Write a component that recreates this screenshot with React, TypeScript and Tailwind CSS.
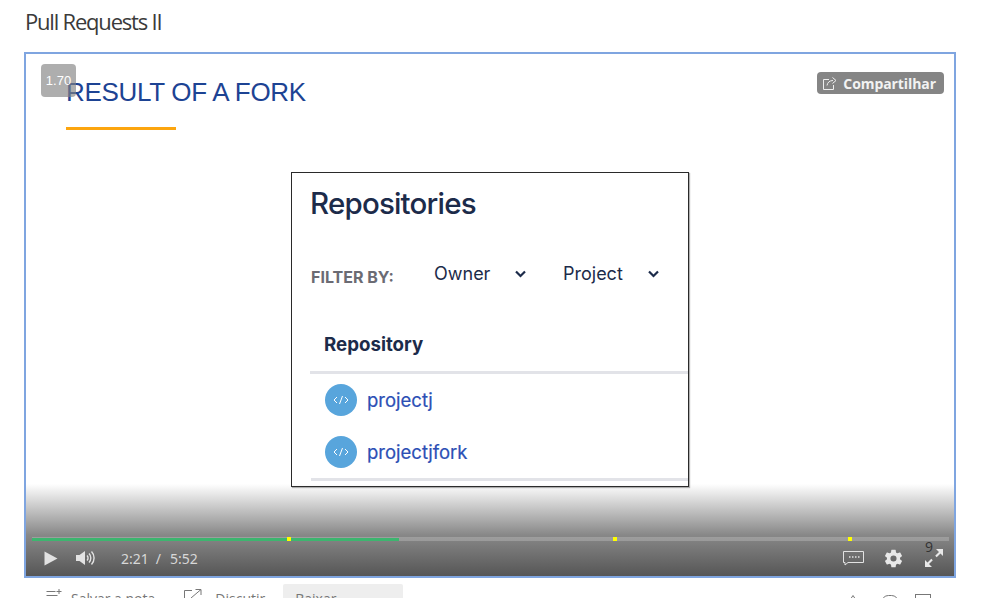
function RepoRow({ name, className }: { name: string; className: string }) {
  return (
    <div className={`flex items-center gap-[10px] pl-[33px] ${className}`}>
      <div className="flex h-8 w-8 items-center justify-center rounded-full bg-[#58a5dc]">
        <svg width="16" height="10" viewBox="0 0 16 10" fill="none" stroke="#fff" strokeWidth="1">
          <path d="M4 2 1 5l3 3M12 2l3 3-3 3M9.500 1 6.500 9" />
        </svg>
      </div>
      <span className="text-[18.5px] leading-none text-[#2c4fb5] [-webkit-text-stroke:0.2px_#2c4fb5]">{name}</span>
    </div>
  );
}

function Chevron() {
  return (
    <svg width="11" height="8" viewBox="0 0 11 8" fill="none" stroke="#1c2b4a" strokeWidth="2.200">
      <path d="M1 1.500 5.500 6 10 1.500" />
    </svg>
  );
}

function RepoCard() {
  return (
    <div className="ml-[225px] h-[315px] w-[398px] overflow-hidden border border-[#2a2a2a] bg-white font-['Inter',sans-serif] shadow-[1px_1px_1px_rgba(0,0,0,0.3)]">
      <h2 className="pl-[18px] pt-[12px] text-[29.500px] font-medium leading-[36px] tracking-[-0.8px] text-[#1c2b4a]">
        Repositories
      </h2>
      <div className="mt-[40px] flex h-[26px] items-center pl-[19px] text-[#1c2b4a]">
        <span className="mt-[6px] w-[123px] text-[16px] font-bold leading-none text-[#6b6b73]">FILTER BY:</span>
        <span className="w-[81px] text-[18px] leading-none">Owner</span>
        <Chevron />
        <span className="ml-[37px] w-[85px] text-[18px] leading-none">Project</span>
        <Chevron />
      </div>
      <div className="mt-[46px] pl-[32px] text-[18.700px] font-bold leading-[24px] text-[#1c2b4a]">Repository</div>
      <div className="ml-[18px] mt-[14px] h-[3px] bg-[#e2e3e8]" />
      <RepoRow name="projectj" className="mt-[10px]" />
      <RepoRow name="projectjfork" className="mt-[20px]" />
      <div className="ml-[19px] mt-[10px] h-[3px] bg-[#e2e3e8]" />
    </div>
  );
}

function Marker({ left }: { left: string }) {
  return <div className={`absolute top-0 h-[4px] w-[4px] bg-[#ffff00] ${left}`} />;
}

function Controls() {
  return (
    <div className="absolute inset-x-0 bottom-0 h-[92px] bg-gradient-to-b from-[rgba(80,80,80,0)] via-[rgba(80,80,80,0.68)] via-[55%] to-[#565656]">
      <div className="absolute left-[6px] right-[5px] top-[53px] h-[4px] bg-[rgba(255,255,255,0.2)]">
        <div className="mt-[0.5px] h-[3px] w-[367px] bg-[#3db56f]" />
        <Marker left="left-[255px]" />
        <Marker left="left-[581px]" />
        <Marker left="left-[816px]" />
      </div>
      <div className="absolute inset-x-0 bottom-0 flex h-[36px] items-center pl-[18px] pr-[11px] text-[#e8e8e8]">
        <svg width="14" height="15" viewBox="0 0 14 15" fill="#e2e2e2">
          <path d="M0.500 0.500 13.500 7.500 0.500 14.500z" />
        </svg>
        <svg width="20" height="16" viewBox="0 0 20 16" fill="none" stroke="#e2e2e2" strokeWidth="1.400" className="ml-[18px]">
          <path d="M0 5h3.500L9 1v14l-5.500-4H0z" fill="#e2e2e2" stroke="none" />
          <path d="M11 5.500a3.500 3.500 0 0 1 0 5M13 3.500a6.500 6.500 0 0 1 0 9M15.500 1.500a9.500 9.500 0 0 1 0 13" />
        </svg>
        <span className="ml-[25px] text-[14px] text-[#d8d8d8]">2:21</span>
        <span className="ml-[7px] text-[14px] text-[#d8d8d8]">/</span>
        <span className="ml-[9px] text-[14px] text-[#d8d8d8]">5:52</span>
        <div className="ml-auto flex items-center">
          <svg width="21" height="16" viewBox="0 0 21 16" fill="none" stroke="#e2e2e2" strokeWidth="1">
            <path d="M.500 1.500h20v11H5L2 15v-2.500H.500z" />
            <path d="M6 7h1.500M9 7h1.500M12 7h1.500M15 7h1.500" strokeWidth="1.500" />
          </svg>
          <svg width="21" height="21" viewBox="0 0 24 24" fill="#e8e8e8" className="ml-[19px]">
            <path fillRule="evenodd" d="M19.430 12.980a7.800 7.800 0 0 0 0-1.960l2.110-1.650a.5.500 0 0 0 .12-.64l-2-3.460a.5.500 0 0 0-.61-.22l-2.490 1a7.300 7.300 0 0 0-1.690-.98l-.38-2.650A.49.490 0 0 0 14 2h-4a.49.490 0 0 0-.49.420l-.38 2.650a7.700 7.700 0 0 0-1.690.98l-2.490-1a.5.500 0 0 0-.61.22l-2 3.460a.49.490 0 0 0 .12.640l2.110 1.650a7.900 7.900 0 0 0 0 1.960l-2.110 1.650a.5.500 0 0 0-.12.640l2 3.460c.12.220.39.300.61.220l2.490-1c.52.400 1.080.730 1.690.98l.38 2.650c.03.240.24.420.49.420h4c.25 0 .46-.18.490-.42l.38-2.650a7.700 7.700 0 0 0 1.690-.98l2.490 1c.23.090.49 0 .61-.22l2-3.460a.5.500 0 0 0-.12-.64zM12 15.500a3.500 3.500 0 1 1 0-7 3.500 3.500 0 0 1 0 7z" />
          </svg>
          <svg width="18" height="18" viewBox="0 0 18 18" fill="#e8e8e8" className="ml-[21px]">
            <path d="M11 0h7v7l-2.500-2.500-3.800 3.800-1.500-1.500 3.800-3.800zM7 18H0v-7l2.500 2.500 3.800-3.800 1.500 1.500-3.800 3.800z" />
          </svg>
        </div>
      </div>
      <span className="absolute right-[21px] top-[56px] font-['Open_Sans',sans-serif] text-[14px] leading-none text-[#333]">9</span>
    </div>
  );
}

function Player() {
  return (
    <div className="relative h-[526px] w-[932px] overflow-hidden border-2 border-[#7fa5e0] bg-white">
      <div className="pl-[40px] pt-[22px]">
        <div className="font-['Liberation_Sans',sans-serif] text-[26px] leading-[32px] tracking-[-0.3px] text-[#1d4393]">
          RESULT OF A FORK
        </div>
        <div className="mt-[19px] h-[3px] w-[110px] bg-[#fca50f]" />
        <div className="mt-[42px]">
          <RepoCard />
        </div>
      </div>

      <div className="absolute left-[15px] top-[10px] flex h-[33px] w-[35px] justify-center rounded-[4px] bg-[rgba(130,130,130,0.65)] pt-[9px] font-['Liberation_Sans',sans-serif] text-[13px] leading-[15px] text-white">
        1.70
      </div>

      <div className="absolute right-[10px] top-[18px] flex h-[22px] items-center gap-[6px] rounded-[4px] bg-[#858585] pl-[6px] pr-[8px] font-['Open_Sans',sans-serif] text-[14px] font-bold tracking-[-0.08px] text-[#f2f2f2]">
        <svg width="14" height="13" viewBox="0 0 14 13" fill="none" stroke="#eee" strokeWidth="1">
          <path d="M6 2.500H.500v10h10V8" />
          <path d="M4 8.500c.500-3 2.500-5 6-5M9.500.500l3.500 3-3.500 3" />
        </svg>
        Compartilhar
      </div>

      <Controls />
    </div>
  );
}

function BottomBar() {
  return (
    <div className="mt-[6px] flex h-[40px] items-start font-['Open_Sans',sans-serif] text-[14px] text-[#777]">
      <div className="ml-[46px] flex items-start pt-[5px]">
        <svg width="16" height="16" viewBox="0 0 16 16" fill="none" stroke="#777" strokeWidth="1">
          <path d="M.500 2.500h9M.500 6.500h11M.500 10.500h11M.500 14.500h11M13 0v5M10.500 2.500h5" />
        </svg>
        <span className="ml-[9px] leading-[19px]">Salvar a nota</span>
      </div>
      <div className="ml-[29px] flex items-start pt-[5px]">
        <svg width="18" height="16" viewBox="0 0 18 16" fill="none" stroke="#777" strokeWidth="1">
          <path d="M8 1.500H.500v14h14V9M7 9 17 .500M11.500.500H17V6" />
        </svg>
        <span className="ml-[13px] leading-[19px]">Discutir</span>
      </div>
      <div className="ml-[18px] h-[40px] w-[120px] rounded-t-[2px] bg-[#eeeeee] pl-[12px] pt-[5px] leading-[19px]">Baixar</div>
      <div className="ml-auto mr-[70px] flex items-start pt-[11px]">
        <svg width="16" height="16" viewBox="0 0 16 16" fill="none" stroke="#777" strokeWidth="1">
          <path d="M8 .500 3 8v7.500h10V8z" />
        </svg>
        <svg width="18" height="16" viewBox="0 0 18 16" fill="none" stroke="#777" strokeWidth="1" className="ml-[20px]">
          <rect x=".500" y=".500" width="17" height="15" rx="7" />
        </svg>
        <svg width="16" height="16" viewBox="0 0 16 16" fill="none" stroke="#777" strokeWidth="1" className="-mt-[1px] ml-[16px]">
          <rect x=".500" y=".500" width="15" height="15" />
        </svg>
      </div>
    </div>
  );
}

export default function App() {
  return (
    <div className="h-[598px] w-[1001px] overflow-hidden bg-white">
      <div className="pl-[24px]">
        <h1 className="h-[52px] pl-[1px] pt-[6px] font-['Open_Sans',sans-serif] text-[22px] leading-[30px] tracking-[-1.2px] text-[#3a3a3a]">
          Pull Requests II
        </h1>
        <Player />
      </div>
      <BottomBar />
    </div>
  );
}
